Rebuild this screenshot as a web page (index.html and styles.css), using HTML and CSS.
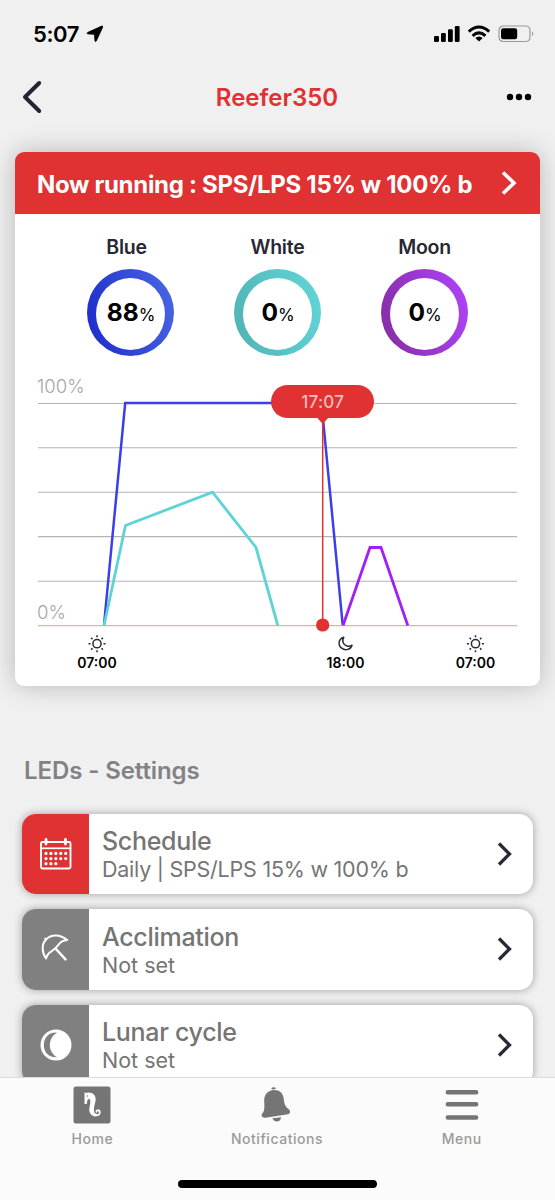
FILE: index.html
```html
<!DOCTYPE html>
<html lang="en">
<head>
<meta charset="utf-8">
<meta name="viewport" content="width=device-width">
<title>Reefer350</title>
<link rel="stylesheet" href="styles.css">
</head>
<body>
<div class="screen">
  <header class="status-bar">
    <div class="clock">
      <span class="clock-time">5:07</span>
      <svg class="location" width="18" height="18" viewBox="0 0 18 18"><path d="M15.600 1.200 1.600 7.600Q.6 8.400 1.600 8.800L8.600 9.200 9 16Q9.400 17 10.200 16L16.600 2.200Q17 .8 15.600 1.200Z" stroke="#000" stroke-width="1" stroke-linejoin="round"/></svg>
    </div>
    <div class="indicators">
      <svg width="26" height="18" viewBox="0 0 26 18"><rect x="0" y="11" width="5" height="6" rx="1.200"/><rect x="7" y="8" width="4.800" height="9" rx="1.200"/><rect x="14" y="4.300" width="4.800" height="12.700" rx="1.200"/><rect x="20.800" y="1" width="4.800" height="16" rx="1.200"/></svg>
      <svg width="24" height="18" viewBox="0 0 24 18"><g fill="none" stroke="#000" stroke-width="3"><path d="M1.800 6.700Q12-2.600 22.200 6.700"/><path d="M5.600 10.800Q12 5 18.400 10.800"/></g><path d="M8.300 13Q12 10 15.700 13L12 16.600Z"/></svg>
      <svg width="37" height="18" viewBox="0 0 37 18"><rect x="1" y="1" width="31" height="15.500" rx="4.300" fill="none" stroke="#999" stroke-width="1.200"/><rect x="3" y="3.200" width="16.200" height="11" rx="2.300"/><path d="M34 6.300Q36.500 8.700 34 11.300Z" fill="#999"/></svg>
    </div>
  </header>

  <nav class="nav-bar">
    <svg width="22" height="34" viewBox="0 0 22 34"><path d="M17.200 3 3 17 17.200 31" fill="none" stroke="#242430" stroke-width="4" stroke-linecap="round" stroke-linejoin="round"/></svg>
    <h1 class="nav-title">Reefer350</h1>
    <svg width="26" height="8" viewBox="0 0 26 8"><circle cx="4" cy="4" r="3.200"/><circle cx="13" cy="4" r="3.200"/><circle cx="22" cy="4" r="3.200"/></svg>
  </nav>

  <main class="content">
    <section class="card">
      <div class="card-banner">
        <span class="banner-text">Now running : SPS/LPS 15% w 100% b</span>
        <svg width="16" height="26" viewBox="0 0 16 26"><path d="M2 2.500 13 13 2 23.500" fill="none" stroke="#fff" stroke-width="3.600"/></svg>
      </div>
      <div class="channels">
        <div class="channel"><span class="channel-name channel-name-blue">Blue</span><div class="ring ring-blue"><div class="ring-value"><b>88</b><small>%</small></div></div></div>
        <div class="channel"><span class="channel-name">White</span><div class="ring ring-white"><div class="ring-value"><b>0</b><small>%</small></div></div></div>
        <div class="channel"><span class="channel-name">Moon</span><div class="ring ring-moon"><div class="ring-value"><b>0</b><small>%</small></div></div></div>
      </div>
      <svg class="chart" width="525" height="319" viewBox="15 367 525 319">
        <g class="grid"><path d="M38 403.500H517M38 447.700H517M38 492.300H517M38 536.600H517M38 581.300H517"/><path class="baseline" d="M38 625.600H517"/></g>
        <text class="axis-label" x="37" y="393">100%</text>
        <text class="axis-label" x="37" y="619">0%</text>
        <path class="line line-blue" d="M104 625 125.200 403.100H321.500L342.700 625"/>
        <path class="line line-white" d="M104 625.500 125.500 525.500 212.500 492.200 256 547.500 277.800 625.500"/>
        <path class="line line-moon" d="M343 625.500 370 547.500H381L407.800 625.500"/>
        <path class="cursor-line" d="M322.700 415V625"/>
        <circle class="marker" cx="322.700" cy="625" r="6.600"/>
        <rect class="marker" x="271" y="385" width="103" height="33" rx="16.500"/>
        <path class="marker" d="M317 417.500H328.500L322.700 424Z"/>
        <text class="cursor-label" x="322.700" y="407.800">17:07</text>
        <g class="sun" transform="translate(97 643.700)"><circle r="4.100"/><path d="M0-6.500V-8.500M0 6.500V8.500M-6.500 0H-8.500M6.500 0H8.500M-4.500-4.500-5.900-5.900M4.500-4.500 5.900-5.900M-4.500 4.500-5.900 5.900M4.500 4.500 5.900 5.900"/></g>
        <path class="sun" d="M343.800 637.300C338.500 638.700 337.500 645.300 341.700 648.200C345.500 651.200 351 649.300 352 645.200C348.800 647.200 344.600 646 343.300 643C342.500 641 342.700 638.800 343.800 637.300Z"/>
        <g class="sun" transform="translate(475.500 643.700)"><circle r="4.100"/><path d="M0-6.500V-8.500M0 6.500V8.500M-6.500 0H-8.500M6.500 0H8.500M-4.500-4.500-5.900-5.900M4.500-4.500 5.900-5.900M-4.500 4.500-5.900 5.900M4.500 4.500 5.900 5.900"/></g>
        <text class="time-label" x="97" y="668">07:00</text>
        <text class="time-label" x="345.500" y="668">18:00</text>
        <text class="time-label" x="475.500" y="668">07:00</text>
      </svg>
    </section>

    <h2 class="section-title">LEDs - Settings</h2>
    <div class="settings">
      <article class="setting">
        <div class="setting-icon active">
          <svg width="32" height="32" viewBox="0 0 32 32"><g fill="none" stroke="#fff"><rect x="1" y="4" width="29.500" height="26.500" rx="1.500" stroke-width="1.900"/><path d="M1 10.300H30.500" stroke-width="1.700"/><path d="M6 1.500V6M25.500 1.500V6" stroke-width="2.800" stroke-linecap="round"/><path d="M6 15.400H28M6 20.600H28M6 25.700H18" stroke-width="3.200" stroke-linecap="round" stroke-dasharray="0 4.930"/></g></svg>
        </div>
        <div class="setting-text"><h3>Schedule</h3><p class="schedule-detail">Daily | SPS/LPS 15% w 100% b</p></div>
        <svg class="chevron" width="16" height="26" viewBox="0 0 16 26"><path d="M2 2.500 12.500 13 2 23.500"/></svg>
      </article>
      <article class="setting">
        <div class="setting-icon">
          <svg width="32" height="32" viewBox="0 0 32 32"><g fill="none" stroke="#fff" stroke-width="2" stroke-linejoin="round" stroke-linecap="round"><path d="M6 25.500C1.500 19 1.600 11 6 6.500C11.500 .8 20 1.300 27.300 7C23.500 7.300 20.600 8.600 19 11.200L15.500 15.200L11.500 18.300C8.500 19.800 7 22 6 25.500Z"/><path d="M6 6.500 5.200 5.500"/><path d="M15.500 15.500 25.500 26.300" stroke-width="2.500"/></g></svg>
        </div>
        <div class="setting-text"><h3>Acclimation</h3><p>Not set</p></div>
        <svg class="chevron" width="16" height="26" viewBox="0 0 16 26"><path d="M2 2.500 12.500 13 2 23.500"/></svg>
      </article>
      <article class="setting">
        <div class="setting-icon">
          <svg width="32" height="32" viewBox="0 0 32 32"><circle cx="16" cy="16" r="15.500" fill="#fff"/><path d="M17 3.500C8 3 3.800 9.500 3.800 16S8 28.800 17 28.300C7.500 22.500 7.500 9.500 17 3.500Z" fill="#808080"/></svg>
        </div>
        <div class="setting-text"><h3>Lunar cycle</h3><p>Not set</p></div>
        <svg class="chevron" width="16" height="26" viewBox="0 0 16 26"><path d="M2 2.500 12.500 13 2 23.500"/></svg>
      </article>
    </div>
  </main>

  <footer class="tab-bar">
    <div class="tabs">
      <div class="tab">
        <svg width="38" height="38" viewBox="0 0 38 38"><rect x=".5" y=".5" width="37" height="37" rx="2.500" fill="#757575"/><path d="M11.500 6.300 13 7 15 6.400C21.500 6.300 23.700 11 22.300 16C21.200 20.500 19.700 25.500 22.500 27.600C25 29.300 27 26.900 25.400 25.500C24.300 24.700 23.200 26.200 24.200 26.700C22.200 27 21.700 23.800 24.500 23.400C27.700 23 28.700 27 26.500 29.100C23.500 31.800 18.500 30.500 16.800 26.500C15.200 22.700 18 18 17.200 14.500C16.700 12.700 15.500 12.700 14.500 14L13.700 18H11.500Z" fill="#fff"/><circle cx="14.300" cy="10" r=".7" fill="#757575"/></svg>
        <span>Home</span>
      </div>
      <div class="tab">
        <svg width="38" height="38" viewBox="0 0 38 38"><g fill="#757575"><path d="M13.500 2.300C14 1 16.600.8 17.500 1.800L17.700 2.900 13.600 3.500Z"/><path d="M6.200 15C6 9 9.500 4.600 15.200 4C21 3.400 25.100 7 25.700 12.500C26.300 17.500 27 20.500 30.500 23C33 25 32.300 27.700 30 28.200L7.400 31.700C4.200 32.200 2.500 29.600 4.400 27.300C7 24.500 6.400 20.300 6.200 15Z"/><path d="M14.500 32.300 23 31.200C23 36.500 16 37 14.500 32.300Z"/></g></svg>
        <span>Notifications</span>
      </div>
      <div class="tab">
        <svg width="38" height="38" viewBox="0 0 38 38"><path d="M4.800 6.200H33.200M4.800 18.200H33.200M4.800 31.500H33.200" stroke="#757575" stroke-width="4.400" stroke-linecap="round"/></svg>
        <span>Menu</span>
      </div>
    </div>
    <div class="home-indicator"></div>
  </footer>
</div>
</body>
</html>
```
FILE: styles.css
```css
* { box-sizing: border-box; }

body {
  margin: 0;
  background: #f0f0f0;
  font-family: Inter, "Liberation Sans", sans-serif;
  color: #000;
}

h1, h2, h3, p { margin: 0; }
svg { display: block; flex-shrink: 0; }

.screen {
  display: flex;
  flex-direction: column;
  width: 555px;
  height: 1200px;
  overflow: hidden;
}

.status-bar {
  display: flex;
  justify-content: space-between;
  align-items: center;
  height: 68px;
  padding: 0 20px 0 33px;
}

.clock, .indicators { display: flex; align-items: center; }
.clock { gap: 7px; }
.clock-time { font-size: 22px; font-weight: 600; letter-spacing: -0.4px; }
.indicators { gap: 7px; }

.nav-bar {
  display: flex;
  justify-content: space-between;
  align-items: center;
  height: 58px;
  padding: 0 23px 0 22px;
}

.nav-title {
  padding: 1px 0 0 4px;
  font-size: 24px;
  font-weight: 560;
  letter-spacing: 0;
  color: #e03133;
}

.content {
  display: flex;
  flex-direction: column;
  flex: 1;
  min-height: 0;
  padding-top: 26px;
  overflow: hidden;
}

.card {
  flex-shrink: 0;
  margin: 0 15px;
  border-radius: 9px;
  background: #fff;
  box-shadow: 0 0 26px rgba(0, 0, 0, 0.240);
}

.card-banner {
  display: flex;
  align-items: center;
  justify-content: space-between;
  height: 62px;
  padding: 0 23px 0 22px;
  border-radius: 9px 9px 0 0;
  background: #e03133;
  color: #fff;
}

.banner-text { padding-top: 2px; font-size: 24px; font-weight: 700; letter-spacing: -0.310px; white-space: nowrap; }

.channels {
  display: flex;
  gap: 60px;
  height: 153px;
  padding: 21px 72px 0;
}

.channel {
  display: flex;
  flex-direction: column;
  align-items: center;
  gap: 9px;
  width: 87px;
}

.channel-name { font-size: 19.500px; line-height: 25px; font-weight: 600; letter-spacing: -0.250px; color: #282832; }
.channel-name-blue { padding-right: 8px; }

.ring {
  display: grid;
  flex-shrink: 0;
  width: 87px;
  height: 87px;
  padding: 9px;
  border-radius: 50%;
}

.ring-blue { background: linear-gradient(75deg, #1c2acb, #4b68e4); }
.ring-white { background: linear-gradient(75deg, #51b2b5, #62d6d8); }
.ring-moon { background: linear-gradient(75deg, #832da0, #b044fc); }

.ring-value {
  display: flex;
  align-items: baseline;
  justify-content: center;
  padding-left: 1px;
  border-radius: 50%;
  background: #fff;
  line-height: 69px;
}

.ring-value b { font-size: 24.500px; font-weight: 700; }
.ring-value small { font-size: 17px; font-weight: 400; letter-spacing: -0.3px; }

.grid { fill: none; stroke: #b4b4b4; stroke-width: 1.100; }
.baseline { stroke: #cebaa8; }
.axis-label { font-size: 18.500px; font-weight: 300; fill: #a5a5a5; }
.line { fill: none; stroke-width: 2.800; }
.line-blue { stroke: #3c3ee8; stroke-width: 2.500; }
.line-white { stroke: #5ed3d5; }
.line-moon { stroke: #a020f5; }
.cursor-line { stroke: #e03133; stroke-width: 1.500; }
.marker { fill: #e03133; }
.cursor-label { font-size: 17px; font-weight: 500; letter-spacing: 0.2px; text-anchor: middle; fill: #f7bcbc; }
.sun { fill: none; stroke: #292935; stroke-width: 1.500; stroke-linejoin: round; }
.time-label { font-size: 14px; font-weight: 600; text-anchor: middle; }

.section-title {
  margin: 69px 24px 26.500px;
  font-size: 24px;
  line-height: 32px;
  font-weight: 600;
  letter-spacing: -0.1px;
  color: #828286;
}

.settings {
  display: flex;
  flex-direction: column;
  gap: 15px;
  padding: 0 22px;
}

.setting {
  display: flex;
  flex-shrink: 0;
  align-items: center;
  height: 80.500px;
  padding-right: 20px;
  border-radius: 14px;
  background: #fff;
  box-shadow: 0 0 8px rgba(0, 0, 0, 0.350);
}

.setting-icon {
  display: grid;
  place-items: center;
  width: 67px;
  height: 100%;
  border-radius: 14px 0 0 14px;
  background: #808080;
}

.setting-icon.active { background: #e03133; }
.setting-text { flex: 1; padding: 3px 0 0 13px; color: #757575; white-space: nowrap; }
.setting-text h3 { font-size: 25px; line-height: 29px; font-weight: 520; letter-spacing: -0.3px; }
.setting-text p { font-size: 21.500px; line-height: 27px; }
.setting-text .schedule-detail { letter-spacing: -0.240px; }
.chevron { fill: none; stroke: #292935; stroke-width: 3.300; }

.tab-bar {
  display: flex;
  flex-direction: column;
  align-items: center;
  height: 123px;
  padding-top: 8px;
  border-top: 1px solid #dcdcdc;
  background: #fbfbfb;
}

.tabs { display: flex; width: 100%; padding-right: 1px; }
.tab {
  display: flex;
  flex: 1;
  flex-direction: column;
  align-items: center;
  gap: 5px;
  font-size: 14px;
  line-height: 19px;
  font-weight: 500;
  letter-spacing: 0.550px;
  color: #9a9a9a;
}

.home-indicator {
  width: 199px;
  height: 8px;
  margin-top: 32px;
  border-radius: 4px;
  background: #000;
}
```
